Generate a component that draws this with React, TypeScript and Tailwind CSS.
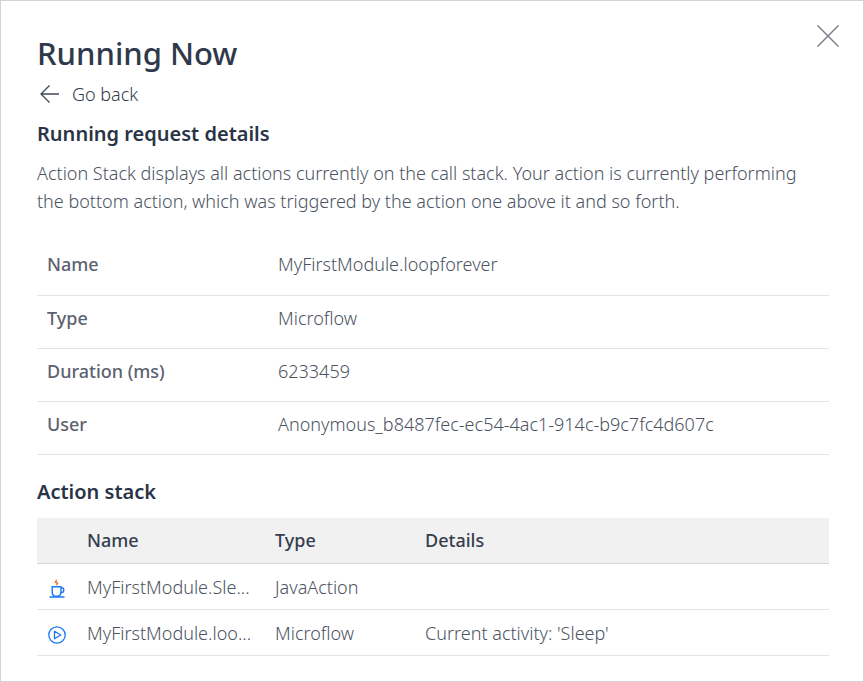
import React from 'react';

const details = [
  ['Name', 'MyFirstModule.loopforever'],
  ['Type', 'Microflow'],
  ['Duration (ms)', '6233459'],
  ['User', 'Anonymous_b8487fec-ec54-4ac1-914c-b9c7fc4d607c'],
];

function CupIcon() {
  return (
    <svg aria-hidden="true" width="18" height="20" viewBox="0 0 18 20" fill="none" stroke="#1b78f2" strokeWidth="1.4">
      <path d="M4.200 7.700H13v4.800q0 4-2.800 4.800H7q-2.800-.8-2.800-4.800z" />
      <path d="M13 9h1.500q1.200 0 1.200 1.200v1.300q0 2-2 2H12.800M1.500 18H16.500" />
      <path d="M8.800 1L7.300 3.200l2.200.9-.8 2.100" stroke="#ec7220" />
    </svg>
  );
}

function PlayIcon() {
  return (
    <svg aria-hidden="true" width="18" height="18" viewBox="0 0 18 18" fill="none" stroke="#1b78f2" strokeWidth="1.3">
      <circle cx="9" cy="9" r="8.200" />
      <path d="M6.500 5.200L12.800 9L6.500 12.800z" strokeLinejoin="round" />
    </svg>
  );
}

const stack = [
  { icon: <CupIcon />, name: 'MyFirstModule.Sle...', type: 'JavaAction', details: '' },
  { icon: <PlayIcon />, name: 'MyFirstModule.loo...', type: 'Microflow', details: "Current activity: 'Sleep'" },
];

export default function App() {
  return (
    <main className="min-h-screen border border-[#d3d3d3] bg-white pt-6 pr-[34px] pb-6 pl-9 font-['Noto_Sans',sans-serif] text-[18px] leading-7 font-light text-[#4c5362]">
      <header className="flex items-start justify-between">
        <h1 className="pt-2.5 text-[31px] leading-9 font-medium text-[#2f394b]">Running Now</h1>
        <button type="button" aria-label="Close" className="-mr-[22px] px-3 pb-3">
          <svg width="22" height="22" viewBox="0 0 22 22" stroke="#7d828c" strokeWidth="1.5">
            <path d="M0.500 0.500l21 21M21.500 0.500l-21 21" />
          </svg>
        </button>
      </header>
      <button type="button" className="mt-[9px] flex items-center gap-3 pl-[3px] text-[#343c4d]">
        <svg aria-hidden="true" width="20" height="18" viewBox="0 0 20 18" fill="none" stroke="#3f4757" strokeWidth="1.3">
          <path d="M19 9H1M9.500 0.500L1 9l8.500 8.500" />
        </svg>
        Go back
      </button>
      <h2 className="mt-3.5 text-[20px] leading-6 font-semibold text-[#2b3446]">Running request details</h2>
      <p className="mt-[13px] pr-4">
        Action Stack displays all actions currently on the call stack. Your action is currently performing the bottom action, which was triggered by the action one above it and so forth.
      </p>
      <table className="mt-[27px] w-full table-fixed text-left">
        <tbody>
          {details.map(([k, v]) => (
            <tr key={k} className="h-[53px] border-b border-[#e4e4e4]">
              <th scope="row" className="w-[231px] pb-2 pl-[10px] font-medium text-[#5c6270]">{k}</th>
              <td className="pb-2 pl-[10px]">{v}</td>
            </tr>
          ))}
        </tbody>
      </table>
      <h2 className="mt-[25px] text-[20px] leading-6 font-semibold text-[#2b3446]">Action stack</h2>
      <table className="mt-3.5 w-full table-fixed text-left">
        <thead>
          <tr className="h-[46px] border-b border-[#d5d5d5] bg-[#f1f1f1] text-[#353e4f]">
            <td className="w-10" />
            <th scope="col" className="w-[188px] pl-[10px] font-medium">Name</th>
            <th scope="col" className="w-[150px] pl-[10px] font-medium">Type</th>
            <th scope="col" className="pl-[10px] font-medium">Details</th>
          </tr>
        </thead>
        <tbody>
          {stack.map((r) => (
            <tr key={r.name} className="h-[46px] border-b border-[#e4e4e4]">
              <td className="pt-1 pl-[11px]">{r.icon}</td>
              <td className="pl-[10px] whitespace-nowrap">{r.name}</td>
              <td className="pl-[10px]">{r.type}</td>
              <td className="pl-[10px]">{r.details}</td>
            </tr>
          ))}
        </tbody>
      </table>
    </main>
  );
}
